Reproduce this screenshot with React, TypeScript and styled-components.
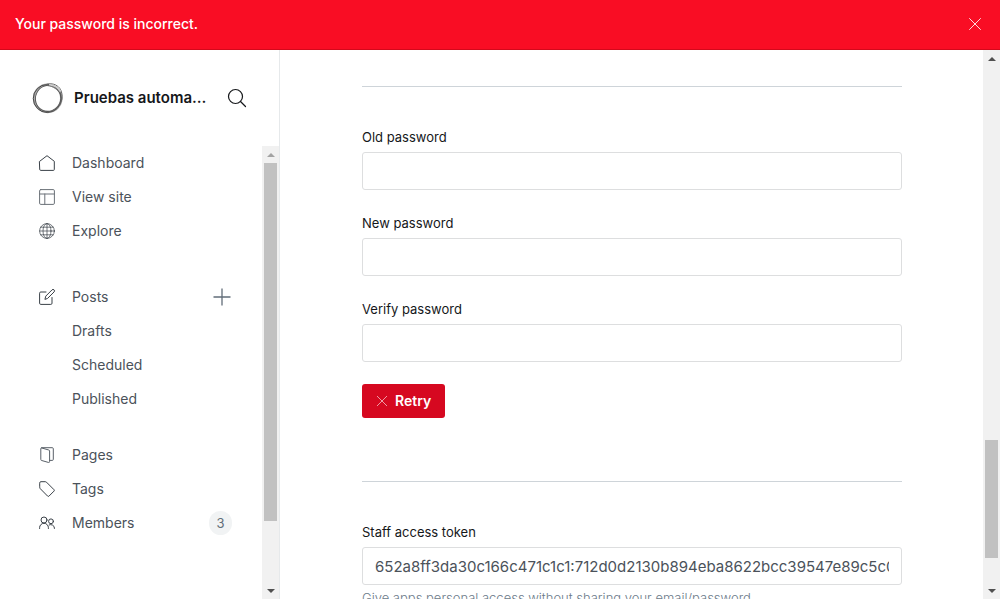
import React from 'react';
import styled, { createGlobalStyle } from 'styled-components';

const GlobalStyle = createGlobalStyle`
  * { box-sizing: border-box; }
  body {
    margin: 0;
    background: #fff;
    color: #15171a;
    font-family: Inter, "Liberation Sans", sans-serif;
    font-size: 14px;
  }
  button, input { font-family: inherit; }
`;

const Shell = styled.div`
  display: flex;
  flex-direction: column;
  height: 100vh;
  overflow: hidden;
`;

const Alert = styled.div`
  display: flex;
  flex: none;
  align-items: center;
  justify-content: space-between;
  height: 50px;
  padding: 0 18px 1px 15px;
  border-bottom: 1px solid #d3091b;
  background: #f90d24;
  color: #fff;
  font-weight: 500;
  line-height: 20px;
`;

const IconButton = styled.button`
  display: flex;
  padding: 0;
  border: 0;
  background: none;
  color: inherit;
  cursor: pointer;
`;

const Body = styled.div`
  display: flex;
  flex: 1;
  min-height: 0;
`;

const Sidebar = styled.aside`
  display: flex;
  flex: none;
  flex-direction: column;
  width: 280px;
  border-right: 1px solid #e6e9eb;
`;

const SiteHeader = styled.header`
  display: flex;
  flex: none;
  align-items: center;
  height: 96px;
  padding: 0 32px;
  gap: 10px;
`;

const SiteName = styled.div`
  flex: 1;
  overflow: hidden;
  font-size: 15px;
  font-weight: 600;
  line-height: 20px;
  text-overflow: ellipsis;
  white-space: nowrap;
  margin-right: 10px;
`;

const NavArea = styled.div`
  display: flex;
  flex: 1;
  min-height: 0;
`;

const Nav = styled.nav`
  display: flex;
  flex: 1;
  flex-direction: column;
  overflow: hidden;
`;

const NavList = styled.ul<{ $gap: number }>`
  margin: 0 0 ${(p) => p.$gap}px;
  padding: 0 30px 0 38px;
  list-style: none;
`;

const NavItem = styled.li`
  display: flex;
  align-items: center;
  justify-content: space-between;
  height: 34px;
`;

const NavLink = styled.a<{ $nested?: boolean }>`
  display: flex;
  align-items: center;
  gap: 16px;
  padding-left: ${(p) => (p.$nested ? 34 : 0)}px;
  color: #4b525a;
  font-size: 14px;
  line-height: 20px;
  text-decoration: none;
`;

const AddButton = styled(IconButton)`
  margin-right: 1px;
  color: #626d79;
`;

const Count = styled.span`
  display: flex;
  align-items: center;
  justify-content: center;
  width: 23px;
  height: 24px;
  border-radius: 12px;
  background: #f1f3f4;
  color: #626d79;
  font-size: 13px;
`;

const Bar = styled.div`
  display: flex;
  flex: none;
  flex-direction: column;
  width: 17px;
  background: #f1f1f1;
`;

const Arrow = styled.span<{ $down?: boolean; $muted?: boolean }>`
  display: flex;
  flex: none;
  align-items: center;
  justify-content: center;
  height: 17px;
  color: ${(p) => (p.$muted ? '#a3a3a3' : '#505050')};
  &::before {
    content: "";
    border: 4px solid transparent;
    border-width: ${(p) => (p.$down ? '4px 4px 0' : '0 4px 4px')};
    border-top-color: ${(p) => (p.$down ? 'currentColor' : 'transparent')};
    border-bottom-color: ${(p) => (p.$down ? 'transparent' : 'currentColor')};
  }
`;

const Space = styled.span<{ $grow: number }>`
  flex: ${(p) => p.$grow} 1 0px;
`;

const Thumb = styled(Space)`
  margin: 0 2px;
  background: #c1c1c1;
`;

const Main = styled.main`
  flex: 1;
  min-width: 0;
  overflow: hidden;
  padding: 36px 81px 0 82px;
`;

const Rule = styled.hr`
  margin: 0;
  border: 0;
  border-top: 1px solid #ced4d9;
`;

const Form = styled.form`
  display: flex;
  flex-direction: column;
  align-items: flex-start;
  padding: 40px 0 63px;
  gap: 22px;
`;

const FieldGroup = styled.div`
  display: flex;
  flex-direction: column;
  gap: 23px;
  width: 100%;
`;

const Field = styled.div`
  display: flex;
  flex-direction: column;
`;

const TokenField = styled(Field)`
  padding-top: 40px;
`;

const Label = styled.label`
  margin-bottom: 5px;
  font-size: 13px;
  line-height: 20px;
`;

const TextInput = styled.input`
  width: 100%;
  height: 38px;
  padding: 0 12px;
  border: 1px solid #dddedf;
  border-radius: 3px;
  background: #fff;
  color: #4b525a;
  font-size: 15px;
  outline: none;
`;

const Help = styled.p`
  margin: 3px 0 0;
  color: #6c7b8a;
  font-size: 13px;
  font-weight: 300;
  line-height: 20px;
`;

const RetryButton = styled.button`
  display: flex;
  align-items: center;
  gap: 7px;
  height: 34px;
  padding: 0 14px;
  border: 0;
  border-radius: 3px;
  background: #d60820;
  color: #fff;
  font-size: 14px;
  font-weight: 600;
  line-height: 20px;
  cursor: pointer;
`;

const icons = {
  home: <path d="M.7 6.3 8 .7l7.3 5.6v8.2a.9.9 0 0 1-.9.9H1.6a.9.9 0 0 1-.9-.9z" />,
  layout: (
    <>
      <rect x=".6" y=".6" width="14.8" height="14.8" rx="1.2" />
      <path d="M.6 5h14.8M5.8 5v10.4" />
    </>
  ),
  globe: (
    <>
      <circle cx="8" cy="8" r="7.4" />
      <ellipse cx="8" cy="8" rx="4" ry="7.4" />
      <path d="M.6 8h14.8M1.7 4.2h12.6M1.7 11.8h12.6M8 .6v14.8" />
    </>
  ),
  edit: (
    <>
      <path d="M7 3H1.800A1.200 1.200 0 0 0 .6 4.200v10a1.200 1.200 0 0 0 1.200 1.200h10a1.200 1.200 0 0 0 1.200-1.200V8.500" />
      <path d="m6 10 .8-2.900L13 .9a1.400 1.400 0 0 1 2.100 2L8.800 9.200z" />
    </>
  ),
  pages: (
    <path d="M2.500.9 9.800 3a1 1 0 0 1 .8 1v10.400a1 1 0 0 1-1.300 1l-6.600-1.900a1 1 0 0 1-.9-1V1.700a1 1 0 0 1 1-1H13.300a1 1 0 0 1 1 1v10.700a1 1 0 0 1-1 1h-2.500" />
  ),
  tag: <path d="M.7 1.800A1.100 1.100 0 0 1 1.800.7h4.400a2 2 0 0 1 1.300.5l7.500 7.500a1 1 0 0 1 0 1.400l-5 5a1 1 0 0 1-1.400 0L1.200 7.600A2 2 0 0 1 .7 6.200z" />,
  members: (
    <>
      <circle cx="5" cy="5" r="3" />
      <path d="M.6 13.500V12.700a4.400 4.400 0 0 1 8.800 0v.8" />
      <circle cx="12" cy="6.300" r="2.400" />
      <path d="M10.200 9.900a3.600 3.600 0 0 1 5.200 3.200v.4" />
    </>
  ),
};

type IconName = keyof typeof icons;

const iconStrokes: Partial<Record<IconName, string>> = {
  layout: '#6b7178',
  pages: '#596068',
};

const NavIcon = ({ name }: { name: IconName }) => (
  <svg width="18" height="18" viewBox="-1 -1 18 18" fill="none" stroke={iconStrokes[name] ?? '#394047'} strokeWidth={name === 'globe' ? 0.7 : 1} strokeLinejoin="round" strokeLinecap="round" aria-hidden="true">
    {icons[name]}
  </svg>
);

const Cross = ({ size, opacity }: { size: number; opacity: number }) => (
  <svg width={size} height={size} viewBox="0 0 14 14" stroke="currentColor" strokeWidth="1" strokeLinecap="round" opacity={opacity} aria-hidden="true">
    <path d="m1.500 1.500 11 11m0-11-11 11" />
  </svg>
);

const Logo = () => (
  <svg width="32" height="32" viewBox="0 0 32 32" fill="none" aria-hidden="true">
    <circle cx="15.700" cy="16.300" r="13.600" stroke="#aaa" strokeWidth="2.600" />
    <circle cx="15.300" cy="16.500" r="14" stroke="#484848" strokeWidth="1" />
    <ellipse cx="16.300" cy="16.300" rx="12.600" ry="13.200" stroke="#555" strokeWidth=".9" transform="rotate(25 16 16)" />
    <path d="M12 3.500C17 .2 26 1.500 29 8.500c3 8 0 15.500-8 20" stroke="#666" strokeWidth="1" />
    <path d="M17 2.800c5 .4 9.500 2.800 11.500 6.700" stroke="#ccc" strokeWidth="2" />
    <path d="M15 3.500c6 .5 11 4 13.800 9" stroke="#666" strokeWidth=".9" />
  </svg>
);

const Scrollbar = ({ before, thumb, after, muted }: { before: number; thumb: number; after: number; muted?: boolean }) => (
  <Bar aria-hidden="true">
    <Arrow $muted={muted} />
    <Space $grow={before} />
    <Thumb $grow={thumb} />
    <Space $grow={after} />
    <Arrow $down />
  </Bar>
);

const Item = ({ icon, label, children }: { icon?: IconName; label: string; children?: React.ReactNode }) => (
  <NavItem>
    <NavLink href="#" $nested={!icon}>
      {icon && <NavIcon name={icon} />}
      {label}
    </NavLink>
    {children}
  </NavItem>
);

const passwordFields = [
  { id: 'old-password', label: 'Old password' },
  { id: 'new-password', label: 'New password' },
  { id: 'verify-password', label: 'Verify password' },
];

export default function App() {
  return (
    <Shell>
      <GlobalStyle />
      <Alert role="alert">
        Your password is incorrect.
        <IconButton type="button" aria-label="Close">
          <Cross size={14} opacity={0.85} />
        </IconButton>
      </Alert>
      <Body>
        <Sidebar>
          <SiteHeader>
            <Logo />
            <SiteName>Pruebas automatizadas</SiteName>
            <IconButton type="button" aria-label="Search">
              <svg width="20" height="20" viewBox="0 0 20 20" fill="none" stroke="#15171a" strokeWidth="1.200" strokeLinecap="round">
                <circle cx="8.500" cy="8.500" r="7" />
                <path d="m13.500 13.500 5 5" />
              </svg>
            </IconButton>
          </SiteHeader>
          <NavArea>
            <Nav>
              <NavList $gap={32}>
                <Item icon="home" label="Dashboard" />
                <Item icon="layout" label="View site" />
                <Item icon="globe" label="Explore" />
              </NavList>
              <NavList $gap={22}>
                <Item icon="edit" label="Posts">
                  <AddButton type="button" aria-label="New post">
                    <svg width="18" height="18" viewBox="0 0 18 18" stroke="currentColor" strokeWidth="1.300">
                      <path d="M9 .5v17M.5 9h17" />
                    </svg>
                  </AddButton>
                </Item>
                <Item label="Drafts" />
                <Item label="Scheduled" />
                <Item label="Published" />
              </NavList>
              <NavList $gap={0}>
                <Item icon="pages" label="Pages" />
                <Item icon="tag" label="Tags" />
                <Item icon="members" label="Members">
                  <Count>3</Count>
                </Item>
              </NavList>
            </Nav>
            <Scrollbar before={0} thumb={358} after={61} muted />
          </NavArea>
        </Sidebar>
        <Main>
          <Rule />
          <Form onSubmit={(e) => e.preventDefault()}>
            <FieldGroup>
              {passwordFields.map((f) => (
                <Field key={f.id}>
                  <Label htmlFor={f.id}>{f.label}</Label>
                  <TextInput id={f.id} type="password" />
                </Field>
              ))}
            </FieldGroup>
            <RetryButton type="submit">
              <Cross size={12} opacity={0.7} />
              Retry
            </RetryButton>
          </Form>
          <Rule />
          <TokenField>
            <Label htmlFor="token">Staff access token</Label>
            <TextInput id="token" type="text" readOnly value="652a8ff3da30c166c471c1c1:712d0d2130b894eba8622bcc39547e89c5c0d4" />
            <Help>Give apps personal access without sharing your email/password</Help>
          </TokenField>
        </Main>
        <Scrollbar before={373} thumb={118} after={24} />
      </Body>
    </Shell>
  );
}
